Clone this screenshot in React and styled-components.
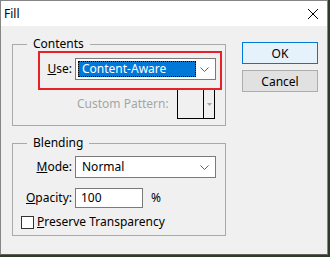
import styled, { createGlobalStyle } from 'styled-components';

const GlobalStyle = createGlobalStyle`
	body {
		margin: 0;
		background: #2f3b29;
		font-family: "Noto Sans", "DejaVu Sans", sans-serif;
		font-size: 12px;
		color: #000;
	}
`;

const Window = styled.div`
	box-sizing: border-box;
	width: 328px;
	height: 255px;
	border: 1px solid #858585;
	border-bottom-color: #5d6158;
	background: #f0f0f0;
	display: flex;
	flex-direction: column;
`;

const TitleBar = styled.div`
	height: 25px;
	background: #fff;
	display: flex;
	align-items: center;
	justify-content: space-between;
	padding: 0 9px 0 3px;

	span {
		line-height: 16px;
	}
`;

const Body = styled.div`
	display: flex;
	gap: 16px;
	padding: 10px 9px 0 11px;
`;

const LeftColumn = styled.div`
	width: 214px;
	display: flex;
	flex-direction: column;
	gap: 9px;
`;

const GroupBox = styled.fieldset`
	margin: 0;
	padding: 0 0 ${(p) => p.$bottom}px 0;
	border: 1px solid #a9a9a9;
	min-width: 0;

	legend {
		margin-left: 14px;
		padding: 0 6px;
		line-height: 16px;
	}
`;

const RedBox = styled.div`
	position: relative;
	z-index: 1;
	box-sizing: border-box;
	width: 184px;
	margin: -1px 0 0 25px;
	border: 2px solid #e8202a;
	padding: 5px 0 8px 0;
	display: flex;
	align-items: center;
	gap: 3px;
`;

const Label = styled.label`
	width: ${(p) => (p.$width ? `${p.$width}px` : 'auto')};
	text-align: right;
	line-height: 16px;
	color: ${(p) => (p.$disabled ? '#a6a6a6' : '#000')};
`;

const Select = styled.div`
	box-sizing: border-box;
	width: 141px;
	height: 22px;
	border: 1px solid #7a7a7a;
	background: #fff;
	display: flex;
	align-items: center;
	padding: 2px;

	svg {
		margin-left: auto;
		margin-right: 4px;
	}
`;

const Selected = styled.span`
	box-sizing: border-box;
	width: 118px;
	height: 16px;
	line-height: 14px;
	padding-left: 3px;
	background: #0078d7;
	color: #fff;
	border: 1px dotted #000;
`;

const Value = styled.span`
	padding-left: 4px;
	line-height: 16px;
`;

const PatternRow = styled.div`
	display: flex;
	align-items: center;
	margin: -2px 10px 0 64px;
`;

const Swatch = styled.div`
	box-sizing: border-box;
	margin-left: auto;
	width: 38px;
	height: 31px;
	border: 1px solid #000;
	border-top: 2px solid #a6a6a6;
	display: flex;

	div:first-child {
		flex: 1;
		border-right: 1px solid #000;
	}

	div:last-child {
		width: 10px;
		display: flex;
		align-items: center;
		justify-content: center;
	}
`;

const FieldRow = styled.div`
	display: flex;
	align-items: center;
	gap: ${(p) => p.$gap ?? 3}px;
	margin-top: ${(p) => p.$top}px;
	padding-left: ${(p) => p.$left ?? 0}px;
`;

const Input = styled.div`
	box-sizing: border-box;
	width: 68px;
	height: 20px;
	border: 1px solid #7a7a7a;
	background: #fff;
	padding-left: 5px;
	line-height: 18px;
`;

const Unit = styled.span`
	margin-left: 5px;
	line-height: 16px;
`;

const Check = styled.span`
	box-sizing: border-box;
	width: 13px;
	height: 13px;
	border: 1px solid #333;
	background: #fff;
`;

const ButtonColumn = styled.div`
	margin-top: 6px;
	display: flex;
	flex-direction: column;
	gap: 6px;
`;

const Button = styled.button`
	box-sizing: border-box;
	width: 76px;
	height: 22px;
	padding: 0;
	font: inherit;
	color: #000;
	border: 1px solid ${(p) => (p.$primary ? '#0078d7' : '#adadad')};
	background: ${(p) => (p.$primary ? '#e5f1fb' : '#e1e1e1')};
`;

const Chevron = () => (
	<svg width="9" height="5" viewBox="0 0 9 5">
		<path d="M0.5 0.5 L4.5 4.5 L8.5 0.5" fill="none" stroke="#606060" strokeWidth="1" />
	</svg>
);

export default function App() {
	return (
		<>
			<GlobalStyle />
			<Window>
				<TitleBar>
					<span>Fill</span>
					<svg width="10" height="10" viewBox="0 0 10 10">
						<path d="M0 0 L10 10 M10 0 L0 10" stroke="#000" strokeWidth="1" />
					</svg>
				</TitleBar>
				<Body>
					<LeftColumn>
						<GroupBox $bottom={6}>
							<legend>Contents</legend>
							<RedBox>
								<Label $width={32}>
									<u>U</u>se:
								</Label>
								<Select>
									<Selected>Content-Aware</Selected>
									<Chevron />
								</Select>
							</RedBox>
							<PatternRow>
								<Label $disabled>Custom Pattern:</Label>
								<Swatch>
									<div />
									<div>
										<svg width="5" height="3" viewBox="0 0 5 3">
											<path d="M0 0 H5 L2.5 3 Z" fill="#a6a6a6" />
										</svg>
									</div>
								</Swatch>
							</PatternRow>
						</GroupBox>
						<GroupBox $bottom={5}>
							<legend>Blending</legend>
							<FieldRow $top={5}>
								<Label $width={59}>
									<u>M</u>ode:
								</Label>
								<Select>
									<Value>Normal</Value>
									<Chevron />
								</Select>
							</FieldRow>
							<FieldRow $top={10}>
								<Label $width={59}>
									<u>O</u>pacity:
								</Label>
								<Input>100</Input>
								<Unit>%</Unit>
							</FieldRow>
							<FieldRow $top={6} $left={8} $gap={3}>
								<Check />
								<Label>
									<u>P</u>reserve Transparency
								</Label>
							</FieldRow>
						</GroupBox>
					</LeftColumn>
					<ButtonColumn>
						<Button $primary>OK</Button>
						<Button>Cancel</Button>
					</ButtonColumn>
				</Body>
			</Window>
		</>
	);
}
